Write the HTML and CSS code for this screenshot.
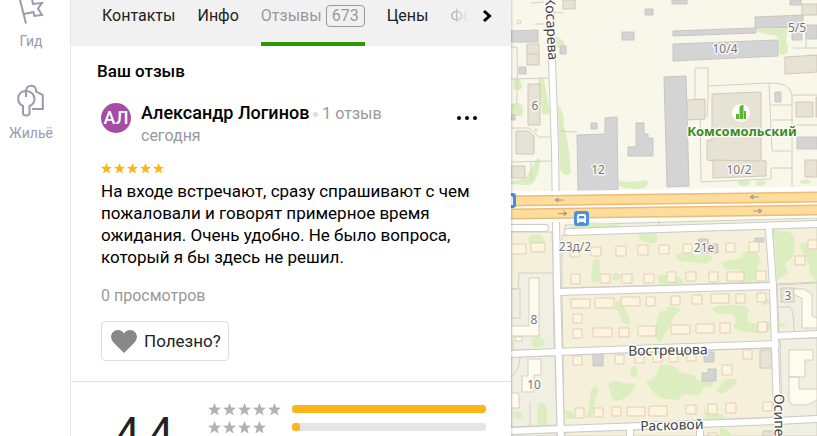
FILE: index.html
```html
<!DOCTYPE html>
<html lang="ru">
<head>
    <meta charset="UTF-8">
    <meta name="viewport" content="width=device-width, initial-scale=1.0">
    <title>Отзывы</title>
    <link rel="stylesheet" href="styles.css">
</head>
<body>
    <svg class="symbols" aria-hidden="true">
        <symbol id="star" viewBox="0 0 14 14">
            <path d="M7 0l1.9 4.8 5.1.3-4 3.3L11.400 13.400 7 10.600 2.600 13.400 4 8.400 0 5.100l5.100-.3z"/>
        </symbol>
    </svg>

    <nav class="sidebar">
        <a class="sidebar-item" href="#">
            <svg width="32" height="26" viewBox="15 0 32 26">
                <path d="M20 0l6 23.500M24 14l9.500-2 .8 4 7.700-1-4-6.500 4-5.500-9 1-1-5"/>
            </svg>
            <span>Гид</span>
        </a>
        <a class="sidebar-item" href="#">
            <svg width="32" height="34" viewBox="15 84 32 34">
                <path d="M26 97v-6c0-7 10-7 10-.5v1l6.800 3.500v14H32"/>
                <path d="M26 91c-5.500 0-7.800 4-7.800 8 0 3.500 2 5.700 4.800 7v7.500c0 2.500 6.500 2.500 6.500 0V106c3-1.300 5-3.500 5-7 0-4-3-8-8.500-8z"/>
            </svg>
            <span>Жильё</span>
        </a>
    </nav>

    <main class="panel">
        <nav class="tabs">
            <a class="tab" href="#">Контакты</a>
            <a class="tab" href="#">Инфо</a>
            <a class="tab active" href="#">Отзывы <span class="tab-count">673</span></a>
            <a class="tab" href="#">Цены</a>
            <a class="tab fade" href="#">Фо</a>
            <button class="tabs-next" type="button" aria-label="Дальше">
                <svg width="10" height="14" viewBox="0 0 10 14"><path d="M2 2l5.500 5L2 12"/></svg>
            </button>
        </nav>

        <section class="review">
            <h2>Ваш отзыв</h2>
            <div class="author">
                <div class="avatar">АЛ</div>
                <div class="author-info">
                    <div><b>Александр Логинов</b><i class="dot"></i><span class="muted">1 отзыв</span></div>
                    <div class="muted">сегодня</div>
                </div>
                <button class="more" type="button" aria-label="Ещё"><i></i><i></i><i></i></button>
            </div>
            <div class="stars">
                <svg><use href="#star"/></svg><svg><use href="#star"/></svg><svg><use href="#star"/></svg><svg><use href="#star"/></svg><svg><use href="#star"/></svg>
            </div>
            <p class="text">На входе встречают, сразу спрашивают с чем пожаловали и говорят примерное время ожидания. Очень удобно. Не было вопроса, который я бы здесь не решил.</p>
            <div class="muted">0 просмотров</div>
            <button class="useful" type="button">
                <svg width="26" height="23" viewBox="0 0 26 23"><path d="M13 23L2.500 12.500C-2.500 7 1 0 7 0c2.600 0 4.700 1.200 6 3.500C14.300 1.200 16.400 0 19 0c6 0 9.500 7 4.500 12.500z"/></svg>
                Полезно?
            </button>
        </section>

        <section class="summary">
            <div class="score">4,4</div>
            <div class="rows">
                <div class="row">
                    <div class="row-stars">
                        <svg><use href="#star"/></svg><svg><use href="#star"/></svg><svg><use href="#star"/></svg><svg><use href="#star"/></svg><svg><use href="#star"/></svg>
                    </div>
                    <div class="bar"><div style="width: 100%"></div></div>
                </div>
                <div class="row">
                    <div class="row-stars">
                        <svg><use href="#star"/></svg><svg><use href="#star"/></svg><svg><use href="#star"/></svg><svg><use href="#star"/></svg>
                    </div>
                    <div class="bar"><div style="width: 4%"></div></div>
                </div>
            </div>
        </section>
    </main>

    <div class="map">
        <svg viewBox="511 0 306 436" preserveAspectRatio="xMinYMin slice">
            <!-- blocks -->
            <g class="block">
                <path d="M511 232h41l2 57h-43zM562 235l206-6 3 53-209 6zM562 294l209-5 3 53-211 7zM563 355l212-7 2 69-213 9zM565 432l62-2v6h-62zM633 430l64-3v9h-64zM703 427l73-3v12h-73zM773 229l44-2v55l-42 2zM565 225l252-7v3l-252 9z"/>
            </g>
            <g class="block city">
                <path d="M519 273h34l1 77h-43v-61h7zM511 357l44-1 2 69-46 2zM777 285l40-2v48l-38 2zM780 339l37-1v78l-35 2zM511 434l46-1v3h-46zM782 424l35-2v14h-35z"/>
            </g>

            <!-- greenery -->
            <g class="green">
                <path d="M556 37q8 1 10 12l-10-2zM538 80q3-6 6 0l6 33q-3 3-8 1zM558 104q8 13 5 20 5 11 8 48-6 8-11-3zM513 79h6q6 8 1 11h-6zM511 105q10-6 12 4l-1 7h-11zM536 160q5-5 4 2-2 15-4 16-2 8-12 7l-13-1v-3q8 0 15-4zM619 181q9 2 28-1 3 8-8 9-14 0-20-3zM756 29l32-1-2 12q5 15-3 15-4 0-4-4 1-10-3-16-15 0-20-5zM570 225q20-5 49 0-5 14-25 6-15 5-20 0z"/>
                <path d="M530 236q13-5 15 7l-16 1q-2-5 1-8zM593 261q4-5 7 0l-1 20q-6 4-8-2zM638 232l17-2q4 8 1 13-8 2-17-5zM612 275q3-5 9 0-1 8-8 5zM658 276q6-3 12 0 16 0 13 10h-24zM676 255q5-5 20 0 18-2 16 4-4 7-18 3-20 1-18-7zM722 262l20-4q0-10 15-5 6 9 0 14 3 11-7 15h-10q5-8-1-12-18 1-17-8zM774 230l16 2q7 8 4 12 3 13-8 18-2 6 3 10-6 5-12 8zM799 245q9-5 18-2v38l-7-6q-1-15-6-20zM737 182q7-5 13 0 0 6-11 3zM756 182q6-4 11 1-3 4-11 2zM800 181q7-4 11 1-4 3-11 1z"/>
                <path d="M616 302q7-3 8 6 6 5 6 17l-8-3q-1-9-7-14zM660 311q8 1 7-4 12-2 14 4-8 3-9 10-4 8-12 22-6-3-4-19zM712 308q9-5 33-2 7 3 2 9 0 12 12 7 20-1 28 3-8 4-15 3-7 8-19 4-25-1-17-10 0-8-6-9-14 4-18-5zM761 299q6-4 9 4l-6 3zM631 368q4-4 6 0v8q-5 3-7-2zM608 385q4-7 16-2l12 1q-2 8-10 13-12 8-15-1zM591 390q5-7 7 0-2 9-4 15l-2 12q-5 2-7-1 5-4 4-11zM646 381q10 0 14-15 12-5 20 6l15 4q0 6 10 4 12 0 6 7-11 0-10 7l-9 2q-7-6-14 4l-12-1q-12-2-20-18zM720 386q4-9 16-7 2 7-6 9-7 9-14 3zM704 406q3 9 9 8 12-1 11 4-9 6-19 0zM532 338q7-4 13 3 0 7-12 6-3-4-1-9zM538 404q7-4 9 6v15l-8 1q-3-10-1-22zM514 412q6-3 9 4-2 5-9 1zM565 411q7-2 9 4v4h-8zM511 339q4 2 3 12h-3zM720 428q8-1 12 8h-12z"/>
            </g>

            <!-- paths -->
            <g class="path">
                <path d="M511 47h6q1 53-1 57-2 3-5 3M511 79l38-1M511 128h18l10 9h11M531 3l13-1M535 24h9M553 12l11 1M558 131l19 1M511 162l40-1M531 161v19M695 100V68h13v31l-1 18M708 86l60-3q23-1 24 12v85M700 100l1 82 70-3v-11h21M769 83l3 68h19M771 105h21M772 120h21M792 95h25M793 125h24M793 48h24M806 48V30M792 180v11M659 216v10M511 318h9v-30M511 377q9-8 9-20M530 402v25M779 307h11q4 2 4 24"/>
                <circle cx="519" cy="22" r="2"/>
                <circle cx="536" cy="130" r="1"/>
            </g>

            <!-- buildings -->
            <g class="grey">
                <path d="M511 31l27-1v12h-27zM519 67h7v7h-7zM645 9h8v6h-8zM622 32h12v8h-12zM560 46h6v8h-6zM591 123h6v6h-6zM577 135l28-1v-16l12-1 1 73-40 1zM636 123h8v11h4v4h5v18h-25v-9h8zM664 77l22-1 3 110-22 1zM672 0h15v4h-15zM790 0h11v5h-11zM673 44l105-4v16l-105 5zM673 31l82-3V17l48-2v12l-47 1v5l-83 3zM792 27h10v13h-10zM806 25h11v14h-11zM775 92h6v10h-6zM797 137h20v12h-20zM755 238h9v4h-9zM698 239h10v5h10v9h-18zM593 354h10v12h-10zM704 352h10v10h-10zM702 373h6v-4h8v12h-14zM511 115h4v5h-4z"/>
            </g>
            <g class="beige">
                <path d="M563 0h12v9h-12zM527 44h12v21h-12zM527 54h12M528 84h12v41h-12zM516 131h12l6 5v18h-18zM511 166h14v12h-14zM785 57l32-2v17l-32 2zM802 4h15v11h-15zM796 102h17v15h-17zM816 97h1v20h-1zM687 100l18-1v20l-18 1zM712 94l49-2v68l5 1v15l-53 2v-17l-6-1v-20h5zM805 160h12v17h-12zM781 288h13v14h-13zM760 350h12v18h-12zM763 431h10v5h-10zM712 160l48 1"/>
            </g>
            <g class="house">
                <path d="M511 244h15v10h-15zM531 243h14v9h-14zM570 247h9v10h-9zM591 247h10v9h-10zM616 246h10v10h-10zM638 245h10v10h-10zM659 245h10v9h-10zM683 244h9v9h-9zM726 243h9v9h-9zM749 242h10v10h-10zM808 240h9v9h-9zM795 256h10v9h-10zM571 274h9v10h-9zM600 274h10v9h-10zM622 274h10v9h-10zM644 274h10v9h-10zM667 272h9v10h-9zM686 272h10v9h-10zM709 272h9v10h-9zM727 272h17v9h-17zM756 271h10v10h-10z"/>
                <path d="M571 299h19v9h-19zM595 298h19v10h-19zM621 297h19v9h-19zM646 297h9v9h-9zM671 296h9v9h-9zM692 295h10v9h-10zM711 294h18v9h-18zM736 294h9v9h-9zM757 293h9v9h-9zM573 314h9v9h-9zM573 329h9v9h-9zM593 328h19v9h-19zM619 328h10v9h-10zM638 326h18v10h-18zM671 325h19v9h-19zM696 324h18v9h-18zM720 323h10v10h-10zM758 322h9v10h-9z"/>
                <path d="M573 356h9v9h-9zM615 355h9v9h-9zM635 354h9v9h-9zM653 353h9v9h-9zM669 353h9v9h-9zM687 352h9v9h-9zM743 350h9v9h-9zM722 365h10v10h-10zM575 408h9v10h-9zM594 408h9v9h-9zM612 407h9v9h-9zM627 407h18v9h-18zM649 406h18v10h-18zM686 405h10v9h-10zM708 404h9v10h-9zM726 403h10v10h-10zM763 402h9v9h-9zM708 433h9v3h-9z"/>
                <path class="tower" d="M529 278h10v58h-28v-10h18zM515 337h7v4h-7zM528 359h13v16h-7v17h-12v-16h6zM511 393h8v15h-8zM794 289h10l8 5v22l5 2v10h-15v-30l-8-3zM789 350h24v10h-8v17h-16zM789 377h10v12h18v11l-10 5h-15l-3-4z"/>
            </g>

            <!-- streets -->
            <g class="street case">
                <path d="M550 -5l2 65 3 90 2 136 4 156M769 230l4 56 5 155M568 232l92-3 157-5M557 292l216-6M511 354l45-2 104-4 116-4M776 336l41-2M511 431l50-2 215-8 41-2M630 427v14M700 424v17M511 228h34"/>
            </g>
            <g class="street">
                <path d="M550 -5l2 65 3 90 2 136 4 156M769 230l4 56 5 155M568 232l92-3 157-5M557 292l216-6M511 354l45-2 104-4 116-4M776 336l41-2M511 431l50-2 215-8 41-2M630 427v14M700 424v17M511 228h34"/>
            </g>

            <!-- avenue -->
            <path class="avenue-bed" d="M511 207l149-2 157-3"/>
            <path class="avenue-case" d="M511 201l149-2 157-2M511 214l149-2 157-2"/>
            <path class="avenue" d="M511 201l149-2 157-2M511 214l149-2 157-2"/>
            <path class="arrows" d="M564 200h-9l3-2v4l-3-2M558 213.500h9l-3-2v4l3-2M759 197h-9l3-2v4l-3-2M753 211h9l-3-2v4l3-2"/>

            <!-- bus stops -->
            <g class="stop">
                <rect x="574" y="211" width="15" height="15" rx="3"/>
                <path d="M577 223v-7l1-2h7l1 2v7h-2v-1h-5v1zM579 216l-.5 2.500h6L584 216z"/>
                <rect x="501" y="193" width="15" height="15" rx="3"/>
                <path d="M511 196h1l1 2v7h-2z"/>
            </g>

            <!-- business centre -->
            <circle cx="741" cy="113" r="9" fill="#fff"/>
            <path d="M736 114h3v5h-3zM739.500 107l2-2h2v14h-4zM744 111h2v8h-2z" fill="#5cb531"/>

            <g class="number">
                <text x="535" y="110">6</text>
                <text x="598" y="174">12</text>
                <text x="725" y="53">10/4</text>
                <text x="797" y="32">5/5</text>
                <text x="739" y="174">10/2</text>
                <text x="575" y="251">23д/2</text>
                <text x="704" y="252">21е</text>
                <text x="534" y="324">8</text>
                <text x="534" y="389">10</text>
                <text x="788" y="300">3</text>
            </g>
            <g class="name">
                <text x="668" y="355" transform="rotate(-1 668 355)">Вострецова</text>
                <text x="672" y="430" transform="rotate(-2 672 430)">Расковой</text>
                <text class="down" transform="translate(545 -3) rotate(87)">Косарева</text>
                <text class="down" transform="translate(774 394) rotate(89)">Осипенко</text>
            </g>
            <text class="place" x="742" y="136">Комсомольский</text>
        </svg>
    </div>
</body>
</html>
```

FILE: styles.css
```css
* {
    box-sizing: border-box;
}

body {
    margin: 0;
    height: 100vh;
    display: flex;
    overflow: hidden;
    font-family: Roboto, "Noto Sans", sans-serif;
    font-size: 17px;
    line-height: 22px;
    color: #000;
    background-color: #fff;
}

a {
    color: inherit;
    text-decoration: none;
}

button {
    font: inherit;
    color: inherit;
    padding: 0;
    border: none;
    background: none;
    cursor: pointer;
}

.symbols {
    position: absolute;
    width: 0;
    height: 0;
}

/* sidebar */
.sidebar {
    flex: 0 0 71px;
    padding-right: 8px;
    border-right: 1px solid #e8e8e8;
    display: flex;
    flex-direction: column;
    gap: 32px;
}

.sidebar-item {
    display: flex;
    flex-direction: column;
    align-items: center;
    gap: 4px;
    font-size: 14px;
    color: #989cae;
}

.sidebar-item svg {
    fill: none;
    stroke: #989cae;
    stroke-width: 2;
}

/* panel */
.panel {
    flex: 0 0 440px;
    min-width: 0;
    overflow: hidden;
    position: relative;
    z-index: 1;
    background-color: #fff;
    box-shadow: 0 0 3px rgba(0, 0, 0, 0.3);
    clip-path: inset(0 -6px 0 0);
}

.tabs {
    height: 46px;
    padding: 0 19px 0 31px;
    display: flex;
    gap: 22px;
    background-color: #f1f1f1;
    color: #222;
    font-size: 16px;
}

.tab {
    height: 46px;
    padding-top: 5px;
    white-space: nowrap;
}

.tab.active {
    color: #999;
    border-bottom: 4px solid #2b9606;
}

.tab-count {
    display: inline-block;
    line-height: 20px;
    padding: 0 5px;
    border: 1px solid #999;
    border-radius: 4px;
}

.tab.fade {
    min-width: 0;
    margin-right: -20px;
    background: linear-gradient(to right, #aaa, #f1f1f1 90%);
    background-clip: text;
    -webkit-background-clip: text;
    color: transparent;
}

.tabs-next {
    margin-left: auto;
    height: 32px;
    display: flex;
    align-items: center;
}

.tabs-next path {
    fill: none;
    stroke: #000;
    stroke-width: 3;
}

.review {
    padding: 14px 30px 20px;
    border-bottom: 1px solid #e0e0e0;
}

.review h2 {
    margin: 0 -4px 20px;
    font-size: 17px;
    font-weight: 500;
}

.author {
    display: flex;
    gap: 10px;
}

.avatar {
    width: 30px;
    height: 30px;
    margin-top: 1px;
    border-radius: 50%;
    background-color: #a64ca6;
    color: #fff;
    font-size: 18px;
    font-weight: 500;
    line-height: 30px;
    text-align: center;
}

.author-info {
    flex: 1;
}

.author-info b {
    font-weight: 500;
    font-size: 18px;
}

.dot {
    display: inline-block;
    width: 5px;
    height: 5px;
    margin: 0 4px;
    border-radius: 50%;
    background-color: #ddd;
    vertical-align: middle;
}

.muted {
    font-size: 16px;
    color: #999;
}

.more {
    height: 32px;
    margin-right: 4px;
    display: flex;
    align-items: center;
    gap: 4px;
}

.more i {
    width: 4px;
    height: 4px;
    border-radius: 50%;
    background-color: #000;
}

.stars {
    display: flex;
    gap: 2px;
    height: 11px;
    margin: 16px 0 6px;
    fill: #fdb51e;
}

.stars svg {
    width: 11px;
    height: 11px;
}

.text {
    margin: 0 0 17px;
}

.useful {
    margin-top: 14px;
    height: 40px;
    padding: 0 7px 0 9px;
    display: flex;
    align-items: center;
    gap: 7px;
    border: 1px solid #ddd;
    border-radius: 4px;
    color: #222;
}

.useful svg {
    fill: #888;
}

/* rating summary */
.summary {
    padding: 21px 25px 0 44px;
    display: flex;
}

.score {
    flex: 0 0 93px;
    padding-top: 6px;
    font-size: 44px;
    line-height: 50px;
    color: #222;
}

.rows {
    flex: 1;
    display: flex;
    flex-direction: column;
    gap: 6px;
}

.row {
    display: flex;
    align-items: center;
    height: 12px;
}

.row-stars {
    flex: 0 0 84px;
    display: flex;
    gap: 2px;
    fill: #b2b2b2;
}

.row-stars svg {
    width: 13px;
    height: 13px;
}

.bar {
    flex: 1;
    height: 8px;
    border-radius: 3px;
    background-color: #e5e5e5;
    overflow: hidden;
}

.bar div {
    height: 100%;
    border-radius: 3px;
    background-color: #fdb51e;
}

/* map */
.map {
    flex: 1;
    min-width: 0;
    background-color: #f9f7e9;
}

.map svg {
    display: block;
    width: 100%;
    height: 100%;
    font-family: "Noto Sans", sans-serif;
}

.block {
    fill: #f5f0d9;
    stroke: #d2cfc2;
}

.block.city {
    fill: #f0efe2;
}

.green {
    fill: #dcedc0;
}

.path {
    fill: none;
    stroke: #d0d0c8;
}

.grey {
    fill: #d4d4d5;
    stroke: #c6c6c6;
}

.beige {
    fill: #e6e2d4;
    stroke: #d0c8b8;
}

.house {
    fill: #fef4dd;
    stroke: #dfcfb5;
}

.tower {
    fill: #fefcee;
    stroke: #d6cfc0;
}

.street {
    fill: none;
    stroke: #fff;
    stroke-width: 6;
    stroke-linecap: round;
}

.street.case {
    stroke: #cbcbcb;
    stroke-width: 8;
}

.avenue-bed,
.avenue-case,
.avenue {
    fill: none;
    stroke: #fff;
    stroke-width: 31;
}

.avenue-case {
    stroke: #efbb75;
    stroke-width: 11;
}

.avenue {
    stroke: #fedc9b;
    stroke-width: 8;
}

.arrows {
    fill: none;
    stroke: #a09a92;
}

.stop rect {
    fill: #4a90e2;
}

.stop path {
    fill: #fff;
    fill-rule: evenodd;
}

.number,
.name,
.place {
    text-anchor: middle;
    paint-order: stroke;
    stroke: #fff;
    stroke-opacity: 0.8;
    stroke-width: 3;
    stroke-linejoin: round;
}

.number {
    font-size: 12px;
    fill: #777;
}

.name {
    font-size: 14px;
    fill: #444;
}

.down {
    text-anchor: start;
}

.place {
    font-size: 13px;
    font-weight: 700;
    fill: #3d8b1f;
}
```
